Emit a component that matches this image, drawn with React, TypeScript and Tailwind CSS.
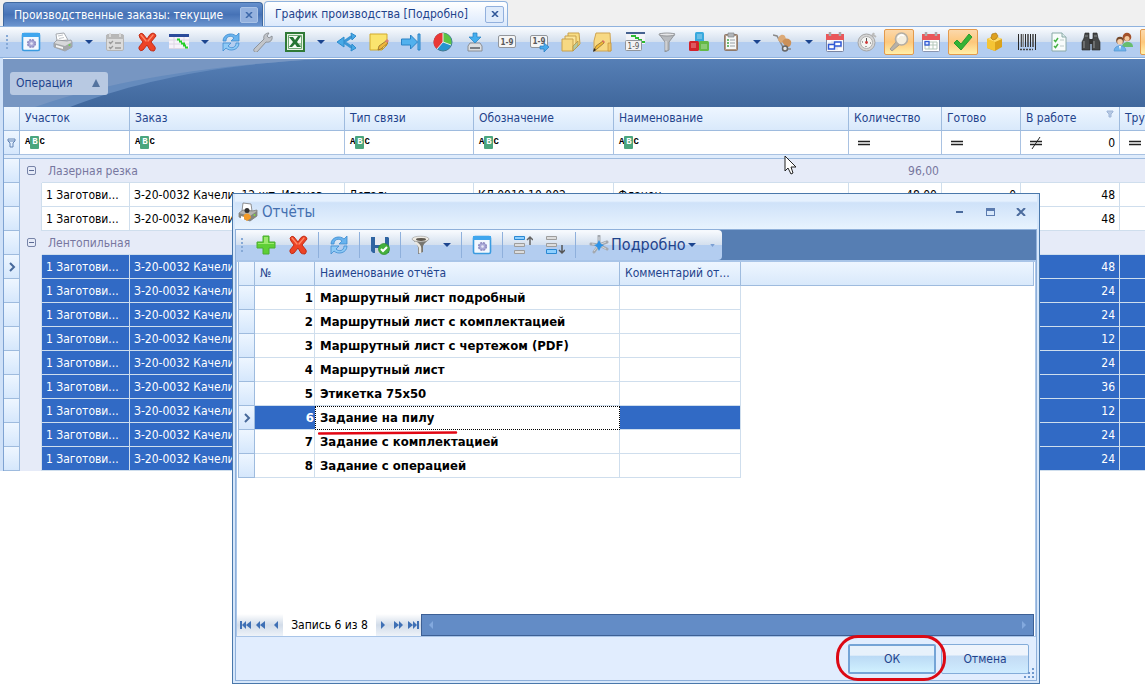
import type { ReactNode } from "react";

const icons: Record<string, ReactNode> = {
  window: (
    <>
      <rect x="1.500" y="1.500" width="17" height="17" rx="1.500" fill="#f3f8fe" stroke="#3a9be0" strokeWidth="1.600" />
      <path d="M1 1h18v4H1z" fill="#3fa6ee" />
      <circle cx="10.500" cy="11.500" r="3.800" fill="#a9a8d6" stroke="#8f8bc0" strokeWidth="1.600" strokeDasharray="2 1" />
      <circle cx="10.500" cy="11.500" r="1.300" fill="#e8e8f6" />
    </>
  ),
  printer: (
    <>
      <path d="M4 9 3 2l8-1 4 7z" fill="#fff" stroke="#a6aab0" />
      <path d="M5 4l5-1M6 6.500l5-1" stroke="#c3c7cc" />
      <path d="m1 11 3-3 10 1 4-1 1 2v5l-7 4-11-4z" fill="#d7d8da" stroke="#8b8d90" strokeWidth=".7" />
      <path d="m1 11 11 3 7-4v5l-7 4-11-4z" fill="#a4a7aa" />
      <path d="m3 13 7 2v2l-7-2z" fill="#f5f5f5" />
      <circle cx="16.500" cy="13" r="1" fill="#6fd44a" />
    </>
  ),
  dialogPrinter: (
    <>
      <path d="M4 9 5 1l8 1 1 7z" fill="#fff" stroke="#777" strokeWidth=".8" />
      <path d="m1 11 4-3 9 1 5-1v6l-7 5-11-4z" fill="#b5b4b0" stroke="#7d7e7e" strokeWidth=".8" />
      <path d="m1 11 11 3 7-5v5l-7 5-11-4z" fill="#85857f" />
      <circle cx="9" cy="8.500" r="2.500" fill="#333" />
      <path d="M5 16c0-6 8-6 8 0l-4 3z" fill="#f29a27" />
      <path d="m3 14 3 1v3l-3-1z" fill="#fff" />
      <circle cx="16.500" cy="13" r="1" fill="#7fdc42" />
    </>
  ),
  tasks: (
    <>
      <rect x="1.500" y="2.500" width="17" height="16" rx="1.500" fill="#dcdcdc" stroke="#b5b5b5" />
      <path d="M1 3h18v4H1z" fill="#b8b8b8" />
      <path d="M5 1v4M15 1v4" stroke="#d9d9d9" strokeWidth="2" />
      <path d="m4 10 1.500 1.500L8 9m-4 6 1.500 1.500L8 14M10 11h6M10 16h6" fill="none" stroke="#999" strokeWidth="1.300" />
    </>
  ),
  cross: (
    <>
      <path
        d="M2 3Q4 0 6 2l4 5q3-6 6-6 3 1 3 3l-5 6 4 5q1 2-1 4-3 0-4-1l-3-5-4 5q-3 2-4-1l0-2 4-5-3-4z"
        fill="#ed4326"
        stroke="#c22d16"
      />
      <path d="m4 3 5 6m2 0 5-6" stroke="#ff8a68" strokeWidth="1.300" strokeLinecap="round" />
    </>
  ),
  gantt: (
    <>
      <path d="M0 3h20v14H0z" fill="#f7f3fa" />
      <path d="M0 8h20M0 12h20M0 16.500h20M5 3v14M15 3v14" stroke="#ddd6e4" />
      <path d="M0 2h20v3H0z" fill="#2b4b9b" />
      <path d="M8 7.500h3M10 9.500h3M12 11.500h4M14 13.500h3M16 15.500h3" stroke="#25cf29" strokeWidth="2" />
    </>
  ),
  refresh: (
    <>
      <path d="M2 9c0-7 9-9 13-5l3-3v8h-8l3-3c-3-3-8-2-8 3z" fill="#68b3ef" stroke="#3d8bcf" strokeWidth=".8" />
      <path d="M18 11c0 7-9 9-13 5l-3 3v-8h8l-3 3c3 3 8 2 8-3z" fill="#8fcaf6" stroke="#3d8bcf" strokeWidth=".8" />
    </>
  ),
  wrench: (
    <path
      d="M1 17 11 7c-1-3 1-6 5-6l-2 3 2 2 3-2c1 4-2 7-6 6L4 20c-2 1-4-1-3-3z"
      fill="#c2c5ca"
      stroke="#888c92"
      strokeWidth=".9"
    />
  ),
  excel: (
    <>
      <path d="M0 0h20v20H0z" fill="#2f7a37" />
      <path d="M2 2h16v16H2z" fill="#e7f3e4" />
      <path d="M3.500 3.500h13v13h-13z" fill="#f7fbf6" stroke="#6fa873" />
      <path d="M13 12h3M13 14h3" stroke="#63a868" />
      <path d="M4 5h4l2 3 3-4h3l-4 6 4 5h-4l-2-3-3 3H4l4-5z" fill="#257433" />
    </>
  ),
  share: (
    <>
      <path d="M5 10c5 0 6-5 12-6M5 10c5 0 6 5 12 6" fill="none" stroke="#3c97d6" strokeWidth="3" />
      <path d="m0 10 7-5v10zM14 1l5 3-4 4zM15 12l4 4-5 3z" fill="#48a9e6" stroke="#2f8bcb" />
    </>
  ),
  note: (
    <>
      <path d="M1 2h17v11l-5 5H1z" fill="#fae46e" stroke="#d1aa2d" />
      <path d="m13 18 1-5 4 0z" fill="#fff4ad" stroke="#c19b2b" />
      <path d="m9 18 1-4 7-5 2 2-7 6z" fill="#efb739" stroke="#8f6b2a" strokeWidth=".8" />
      <path d="m16 9 2-2 2 2-2 2z" fill="#d98074" />
    </>
  ),
  toEnd: (
    <>
      <path d="M.5 7h9V3l7 7-7 7v-4h-9z" fill="#52b1ee" stroke="#2a83c6" />
      <path d="M17 2h2v16h-2z" fill="#62b7ee" stroke="#2a83c6" />
    </>
  ),
  pie: (
    <>
      <circle cx="10" cy="10" r="9" fill="#2695cf" stroke="#41788f" />
      <path d="M10 10V1A9 9 0 0 0 4 17z" fill="#e93836" />
      <path d="M10 10V1a9 9 0 0 1 8 12z" fill="#5dc443" />
      <path d="M10 1v9l-6 7m6-7 8 3" stroke="#e8eeee" fill="none" />
    </>
  ),
  download: (
    <>
      <path d="m3 14 2-3h10l2 3v5H3z" fill="#dcdee1" stroke="#8a8e94" />
      <path d="M5 16h10" stroke="#7a7e84" strokeWidth="2" />
      <path d="M8 1h4v4h4l-6 6-6-6h4z" fill="#45aeee" stroke="#237fc2" strokeWidth=".7" />
    </>
  ),
  number: (
    <>
      <rect x="1.500" y="3.500" width="17" height="12" rx="1.500" fill="#f5f5f5" stroke="#92969c" />
      <text x="10" y="13" textAnchor="middle" fontSize="8" fontWeight="bold" fill="#58595c">1-9</text>
    </>
  ),
  numberNext: (
    <>
      <rect x="1.500" y="3.500" width="17" height="12" rx="1.500" fill="#f5f5f5" stroke="#92969c" />
      <text x="10" y="12" textAnchor="middle" fontSize="8" fontWeight="bold" fill="#58595c">1-9</text>
      <path d="M11 14h4v-3l5 4-5 5v-3h-4z" fill="#47a9ec" stroke="#267bc0" strokeWidth=".7" />
    </>
  ),
  folders: (
    <>
      <path d="M7 1h11l1 11-4 4H7z" fill="#f8dd83" stroke="#c9a14c" />
      <path d="M4 4h11v11l-2 2H4z" fill="#fbe59b" stroke="#c9a14c" />
      <path d="M1 7h11v12H1z" fill="#f7d983" stroke="#c9a14c" />
      <path d="m12 19 5-5V9l-5 5z" fill="#b4c9a0" stroke="#b98c35" strokeWidth=".7" />
    </>
  ),
  folderPen: (
    <>
      <path d="M3 1h14l1 18H1V9z" fill="#f7d984" stroke="#cfa452" />
      <path d="M15 11h3v8h-3z" fill="#f0c565" stroke="#c39439" strokeWidth=".7" />
      <path d="m1 19 2-5 7-5 1 2-7 6z" fill="#f2bb36" stroke="#705127" strokeWidth=".6" />
      <path d="m9 9 1-1 2 2-1 1z" fill="#df6c62" />
      <path d="m0 20 1-4 2 2z" fill="#292929" />
    </>
  ),
  ganttNumber: (
    <>
      <path d="M1 1h19v11H1z" fill="#f2f3f7" />
      <path d="M1 1h19" stroke="#44618f" strokeWidth="2" />
      <path d="M6 4h5M10 6h4M13 8h4M16 10h4" stroke="#2cbb30" strokeWidth="2" />
      <rect x=".5" y="8.500" width="16" height="10" rx="1" fill="#f2f2f2" stroke="#92969c" />
      <text x="8.500" y="17" textAnchor="middle" fontSize="8" fill="#555">1-9</text>
    </>
  ),
  funnel: (
    <>
      <path d="M2 2h16l-6 8v8l-4 2V10z" fill="#b8bbbf" stroke="#85888c" strokeWidth=".8" />
      <ellipse cx="10" cy="2.500" rx="8" ry="1.500" fill="#e5e6e8" stroke="#85888c" strokeWidth=".8" />
      <path d="M9 9v9" stroke="#e4e5e6" />
    </>
  ),
  darkFunnel: (
    <>
      <path d="M1 4c3 3 5 5 6 8v7l5-2v-6c1-3 4-4 6-7z" fill="#77756f" />
      <path d="M4 7c3 2 5 4 5 6v5" fill="none" stroke="#e9e7e2" strokeWidth="2.500" />
      <ellipse cx="9.500" cy="4" rx="8.500" ry="2.800" fill="#eeebe4" stroke="#999" strokeWidth=".6" />
      <ellipse cx="10" cy="4.500" rx="5" ry="1.400" fill="#5e584f" />
    </>
  ),
  cubes: (
    <>
      <rect x="6" y="0" width="9" height="10" rx="1.500" fill="#38a9de" />
      <rect x="0" y="9" width="10" height="10" rx="1.500" fill="#d3222b" />
      <rect x="10" y="9" width="10" height="10" rx="1.500" fill="#65b946" />
      <path d="M8 2h5v5H8zM2 11h5v5H2zM12 12h6v5h-6z" fill="#ffffff40" />
    </>
  ),
  clipboard: (
    <>
      <rect x="3.500" y="2.500" width="13" height="16" rx="1" fill="#b39a87" stroke="#8f7a6b" />
      <path d="M5 4h10v13H5z" fill="#f6f8f8" />
      <path d="M7 1h6v4H7z" fill="#b2b6ba" stroke="#84878b" strokeWidth=".7" />
      <path d="M6 8h2M6 11h2M6 14h2" stroke="#42a246" strokeWidth="1.500" />
      <path d="M9 8h5M9 11h5M9 14h5" stroke="#99a0a6" />
    </>
  ),
  cart: (
    <>
      <path d="m0 3 4 1 7 13h7" fill="none" stroke="#8a8a8a" strokeWidth="1.500" />
      <path d="M5 8c0-4 4-7 7-4l1 3-5 4z" fill="#dcaa78" />
      <path d="M9 10c2-4 6-5 9-1 1 4-2 7-5 6z" fill="#cc9159" />
      <circle cx="12" cy="16.500" r="2.500" fill="#e6e6e6" stroke="#666" strokeWidth="1.500" />
    </>
  ),
  calendarPlan: (
    <>
      <rect x="1.500" y="2.500" width="17" height="17" rx="1" fill="#fbfbfd" stroke="#7a85a1" />
      <path d="M1 2h18v6H1z" fill="#e9575a" />
      <path d="M5 0v4M15 0v4" stroke="#aaa" strokeWidth="2.500" />
      <path d="M3 11h14M3 15h14M7 9v9M12 9v9" stroke="#d7dae4" />
      <path d="M3.500 17v-4.500h6V10H16v4H9.500v3z" fill="#fff" stroke="#315ad5" strokeWidth="1.500" />
    </>
  ),
  stopwatch: (
    <>
      <path d="m15 2 4 3m-2-4-2 4" stroke="#bbb" strokeWidth="2" />
      <circle cx="9.500" cy="10.500" r="8.500" fill="#d5d5d5" stroke="#a5a5a5" />
      <circle cx="9.500" cy="10.500" r="6" fill="#f5f5f3" stroke="#b0b0b0" />
      <path d="M9.500 10.500V6M5 10h1M13 11h1M9 14v1" stroke="#555" />
      <circle cx="9.500" cy="10.500" r="1.400" fill="#d03737" />
    </>
  ),
  magnifier: (
    <>
      <path d="m1 17 6-7 3 3-7 6z" fill="#b8b2a9" stroke="#958f86" strokeWidth=".8" />
      <circle cx="12.500" cy="7" r="6" fill="#f4eedf" stroke="#b4aea4" strokeWidth="1.700" />
      <path d="M9 6c1-3 4-4 6-2" fill="none" stroke="#fff" strokeWidth="1.500" />
    </>
  ),
  calendar: (
    <>
      <rect x="1.500" y="2.500" width="17" height="17" rx="1" fill="#fff" stroke="#8b96b0" />
      <path d="M1 2h18v6H1z" fill="#e9575a" />
      <path d="M5 0v4M15 0v4" stroke="#aaa" strokeWidth="2.500" />
      <path d="M4 10h12v7H4zM4 13h12M8 10v7M12 10v7" fill="none" stroke="#b5c8bb" />
      <rect x="4" y="9.500" width="4" height="3.500" fill="#dce7ff" stroke="#315ad5" strokeWidth="1.300" />
    </>
  ),
  check: <path d="m1 11 3-3 4 4 8-10 3 3L8 18z" fill="#35b335" stroke="#2a9a30" />,
  box: (
    <>
      <path d="m2 7 7-3 8 3v8l-7 4-8-3z" fill="#dba21b" />
      <path d="m2 7 8 3v9l-8-3z" fill="#f5c535" />
      <path d="m2 7 8 3 7-3-7-3z" fill="#ffdd6b" />
      <path d="m6 6 1-4 4-1 2 3-2 3-3 1z" fill="#dea11f" stroke="#a97816" strokeWidth=".7" />
    </>
  ),
  barcode: (
    <>
      <path d="M1.500 2v16M8.500 2v13M13.500 2v13M18.500 2v16" stroke="#292929" />
      <path d="M4.500 2v13M11 2v13M16 2v13" stroke="#4c4c4c" strokeWidth="1.600" />
      <path d="M6.500 2v13" stroke="#888" />
      <path d="M3 17.500h13" stroke="#444" strokeWidth="1.500" strokeDasharray="2 1" />
    </>
  ),
  checklist: (
    <>
      <path d="M3 1h10l4 4v14H3z" fill="#f7fcfb" stroke="#8baaa8" />
      <path d="M13 1v4h4" fill="#dcecea" stroke="#8baaa8" />
      <path d="m5 8 1.500 1.500L9 6m-4 8 1.500 1.500L9 12" fill="none" stroke="#46b444" strokeWidth="1.500" />
      <path d="M11 8h4M11 14h4" stroke="#bccbca" />
    </>
  ),
  binoculars: (
    <>
      <path d="M4 1h4v5l1 3v9H1v-8l2-4zM12 1h4l1 5 2 4v8h-8V9l1-3z" fill="#464849" stroke="#222" strokeWidth=".6" />
      <path d="M8 7h4v5H8z" fill="#333" />
      <path d="M4 4h3M13 4h3M3 9v7M13 9v7" stroke="#868989" strokeWidth="1.200" />
    </>
  ),
  people: (
    <>
      <path d="M9 15c0-6 11-7 11 0z" fill="#67bd6e" />
      <circle cx="14" cy="5" r="4.300" fill="#a4522b" />
      <circle cx="14" cy="6.500" r="2.500" fill="#f3c89d" />
      <path d="M1 19c0-7 12-7 12 0z" fill="#6fb2ec" stroke="#5595d0" strokeWidth=".7" />
      <circle cx="7" cy="8.500" r="3.800" fill="#76492b" />
      <circle cx="7" cy="9.800" r="2.800" fill="#f6cfaa" />
      <path d="m6 14 1 4 1-4z" fill="#fff" />
    </>
  ),
  plus: (
    <>
      <path d="M7 1h6v6h6v6h-6v6H7v-6H1V7h6z" fill="#5fcf35" stroke="#4bae30" />
      <path d="M8 2h4v6h6v1H8H2V8h6z" fill="#9be86e" />
    </>
  ),
  save: (
    <>
      <path d="M1 2h17l1 1v15H3l-2-2z" fill="#2f64a1" />
      <path d="M5 2h10v8H5z" fill="#e7ebf2" />
      <path d="M5 13h8v5H5z" fill="#c9d3e0" />
      <circle cx="14" cy="14" r="5.500" fill="#45b03c" stroke="#2f8f2c" strokeWidth=".7" />
      <path d="m11 14 2 2 4-4" fill="none" stroke="#fff" strokeWidth="2" />
    </>
  ),
  rowsUp: (
    <>
      <path d="M1.500 1.500h10v3h-10z" fill="#8fd0ff" stroke="#2b88d2" />
      <path d="M1.500 8.500h10v3h-10zM1.500 15.500h10v3h-10z" fill="#ddd" stroke="#9d9d9d" />
      <path d="M17 10V2m-3 3 3-3 3 3" fill="none" stroke="#666" strokeWidth="1.500" />
    </>
  ),
  rowsDown: (
    <>
      <path d="M1.500 1.500h10v3h-10zM1.500 8.500h10v3h-10z" fill="#ddd" stroke="#9d9d9d" />
      <path d="M1.500 14.500h10v4h-10z" fill="#8fd0ff" stroke="#2b88d2" />
      <path d="M17 10v8m-3-3 3 3 3-3" fill="none" stroke="#555" strokeWidth="1.500" />
    </>
  ),
  network: (
    <>
      <path d="M10 10V1m0 9 8-3m-8 3 8 4m-8-4-5 7m5-7-8-1" stroke="#a4a9b0" strokeWidth="3" strokeLinecap="round" />
      <path d="M10 10V2m0 8 7-3m-7 3 7 4m-7-4-5 6m5-6-7-1" stroke="#d4d8dc" />
      <path d="M10 5l2 4 3 1-3 2-2 4-2-4-3-2 3-1z" fill="#2d92e6" />
    </>
  ),
};

function Icon({ name }: { name: string }) {
  return (
    <svg viewBox="0 0 20 20" className="size-5 shrink-0" fill="none" aria-hidden="true">
      {icons[name]}
    </svg>
  );
}

function Caret() {
  return (
    <svg viewBox="0 0 8 4" className="h-1 w-2" aria-hidden="true">
      <path d="M0 0h8L4 4z" fill="#1c458f" />
    </svg>
  );
}

function ToolButton({ name, label, active }: { name: string; label: string; active?: boolean }) {
  return (
    <button
      type="button"
      aria-label={label}
      aria-pressed={active}
      className={
        active
          ? "mx-px flex h-[26px] w-[30px] shrink-0 items-center justify-center rounded-xs border border-[#e39a4c] bg-linear-to-b from-[#fbd8ab] via-[#fdc77b] to-[#fff0a9]"
          : "mx-px flex h-[26px] w-[30px] shrink-0 items-center justify-center"
      }
    >
      {name && <Icon name={name} />}
    </button>
  );
}

function CaretButton({ label }: { label: string }) {
  return (
    <button type="button" aria-label={label} className="flex h-[26px] w-5 shrink-0 items-center justify-center">
      <Caret />
    </button>
  );
}

function Grip() {
  return (
    <span className="flex w-2 shrink-0 flex-col items-center gap-[2px]">
      <i className="size-[2px] bg-[#86a9d6]" />
      <i className="size-[2px] bg-[#86a9d6]" />
      <i className="size-[2px] bg-[#86a9d6]" />
      <i className="size-[2px] bg-[#86a9d6]" />
    </span>
  );
}

function Separator() {
  return <span className="mx-1 h-[26px] w-px shrink-0 bg-[#8fb0dc]" />;
}

// [icon, label, has a drop-down, is pressed]
const tools: [string, string, boolean?, boolean?][] = [
  ["window", "Настройка"],
  ["printer", "Печать", true],
  ["tasks", "Задачи"],
  ["cross", "Удалить"],
  ["gantt", "Диаграмма", true],
  ["refresh", "Обновить"],
  ["wrench", "Сервис"],
  ["excel", "Excel", true],
  ["share", "Связи"],
  ["note", "Заметка"],
  ["toEnd", "В конец"],
  ["pie", "График"],
  ["download", "Загрузить"],
  ["number", "Нумерация"],
  ["numberNext", "Следующий номер"],
  ["folders", "Папки"],
  ["folderPen", "Изменить папку"],
  ["ganttNumber", "Номера на диаграмме"],
  ["funnel", "Фильтр"],
  ["cubes", "Комплектация"],
  ["clipboard", "Задание", true],
  ["cart", "Перемещение", true],
  ["calendarPlan", "План"],
  ["stopwatch", "Время"],
  ["magnifier", "Поиск", false, true],
  ["calendar", "Календарь"],
  ["check", "Готово", false, true],
  ["box", "Склад"],
  ["barcode", "Штрихкод"],
  ["checklist", "Проверка"],
  ["binoculars", "Найти"],
  ["people", "Сотрудники"],
  ["", "Ещё", false, true],
];

const workCounts = [48, 24, 24, 12, 24, 36, 12, 24, 24];

const reports = [
  "Маршрутный лист подробный",
  "Маршрутный лист с комплектацией",
  "Маршрутный лист с чертежом (PDF)",
  "Маршрутный лист",
  "Этикетка 75x50",
  "Задание на пилу",
  "Задание с комплектацией",
  "Задание с операцией",
];

const head = "border-r border-b border-[#9ebbde] bg-linear-to-b from-[#eef6ff] to-[#d9e9fb] px-[5px] pb-px text-left font-normal text-[#1f438c]";
const marker = "border-r border-b border-[#9ebbde] bg-linear-to-b from-[#eef6ff] to-[#d5e7fc]";
const filterCell = "border-r border-b border-[#a9c2e2] bg-white px-[5px]";
const cell = "truncate border-r border-b border-[#cfdeed] px-1";
const bar = "bg-linear-to-b from-[#f6f9fd] from-5% via-[#d3dfee] via-50% to-[#b3cdf0] to-50%";

function Abc() {
  return (
    <span className="flex items-center font-mono text-[9px] leading-[13px] font-bold text-black">
      A<span className="w-[9px] rounded-[1px] bg-[#4ba67e] text-center text-white">B</span>C
    </span>
  );
}

function Equals({ crossed }: { crossed?: boolean }) {
  return (
    <svg viewBox="0 0 12 12" className="ml-1 h-3 w-3" fill="none" stroke="#222" aria-hidden="true">
      <path d="M0 4.500h12M0 7.500h12" strokeWidth="1.500" />
      {crossed && <path d="m2 12 8-12" />}
    </svg>
  );
}

function Chevron() {
  return (
    <svg viewBox="0 0 8 10" className="mx-auto h-[10px] w-2" fill="none" aria-hidden="true">
      <path d="m2 1 4 4-4 4" stroke="#47699b" strokeWidth="2" />
    </svg>
  );
}

function GroupRow({ title, total }: { title: string; total?: string }) {
  return (
    <tr className="h-6 bg-[#e6ebf8] text-[#77779f]">
      <td className={marker} />
      <td>
        <button type="button" aria-label="Свернуть" className="mx-auto mb-[2px] flex size-[9px] items-center justify-center rounded-xs border border-[#7884a8]">
          <i className="h-px w-[5px] bg-[#5c6a94]" />
        </button>
      </td>
      <td colSpan={5} className="border-b border-[#cfdeed] px-[6px]">{title}</td>
      <td className="border-b border-[#cfdeed] pr-[3px] text-right">{total}</td>
      <td colSpan={3} className="border-b border-[#cfdeed]" />
    </tr>
  );
}

function OrderRow({ count, selected, current }: { count: number; selected?: boolean; current?: boolean }) {
  return (
    <tr className={selected ? "h-6 bg-[#316ac5] text-white" : "h-6 bg-white text-black"}>
      <td className={marker}>{current && <Chevron />}</td>
      <td className="border-r border-[#cfdeed] bg-[#e6ebf8]" />
      <td className={cell}>1 Заготови...</td>
      <td className={cell}>З-20-0032 Качели, 12 шт, Иванов</td>
      <td className={cell}>Деталь</td>
      <td className={cell}>КЛ.0010.10.002</td>
      <td className={cell}>Фланец</td>
      <td className={cell + " text-right"}>{count},00</td>
      <td className={cell + " text-right"}>0</td>
      <td className={cell + " text-right"}>{count}</td>
      <td className={cell} />
    </tr>
  );
}

function OrdersTable() {
  return (
    <table className="w-full table-fixed border-separate border-spacing-0 border-l border-[#7fa3d2] text-[12px] leading-4 [&_tr>:last-child]:border-r-0">
      <colgroup>
        <col className="w-[16px]" />
        <col className="w-[22px]" />
        <col className="w-[88px]" />
        <col className="w-[215px]" />
        <col className="w-[129px]" />
        <col className="w-[140px]" />
        <col className="w-[235px]" />
        <col className="w-[93px]" />
        <col className="w-[79px]" />
        <col className="w-[99px]" />
        <col />
      </colgroup>
      <thead>
        <tr className="h-6">
          <th className={head} />
          <th colSpan={2} className={head}>Участок</th>
          <th className={head}>Заказ</th>
          <th className={head}>Тип связи</th>
          <th className={head}>Обозначение</th>
          <th className={head}>Наименование</th>
          <th className={head}>Количество</th>
          <th className={head}>Готово</th>
          <th className={head}>
            <span className="flex justify-between">
              В работе
              <svg viewBox="0 0 8 8" className="size-2 shrink-0" aria-hidden="true">
                <path d="M1 1h6v1L5 4v3H3V4L1 2z" fill="#b7c9e3" stroke="#9fb6d8" />
              </svg>
            </span>
          </th>
          <th className={head + " overflow-hidden whitespace-nowrap"}>Тру</th>
        </tr>
        <tr className="h-6">
          <td className={marker}>
            <svg viewBox="0 0 9 10" className="mx-auto h-[10px] w-[9px]" fill="none" stroke="#6384b5" aria-hidden="true">
              <path d="M1 1h7v2L6 5v4H3V5L1 3zM1 3h7" />
            </svg>
          </td>
          <td colSpan={2} className={filterCell}><Abc /></td>
          <td className={filterCell}><Abc /></td>
          <td className={filterCell}><Abc /></td>
          <td className={filterCell}><Abc /></td>
          <td className={filterCell}><Abc /></td>
          <td className={filterCell}><Equals /></td>
          <td className={filterCell}><Equals /></td>
          <td className="border-r border-b border-[#a9c2e2] bg-white pr-1 pl-[5px]">
            <div className="flex items-center justify-between">
              <Equals crossed />
              <input aria-label="Фильтр: В работе" defaultValue="0" className="w-10 text-right text-black outline-none" />
            </div>
          </td>
          <td className={filterCell}><Equals /></td>
        </tr>
        <tr className="h-1">
          <td colSpan={11} className="h-1 border-b border-[#9ebbde] bg-[#dfecfc] p-0" />
        </tr>
      </thead>
      <tbody>
        <GroupRow title="Лазерная резка" total="96,00" />
        <OrderRow count={48} />
        <OrderRow count={48} />
        <GroupRow title="Лентопильная" />
        {workCounts.map((count, i) => (
          <OrderRow key={i} count={count} selected current={i === 0} />
        ))}
      </tbody>
    </table>
  );
}

function ReportsTable() {
  return (
    <table className="w-full table-fixed border-separate border-spacing-0 border-l border-[#9ebbde] text-[12px] leading-4">
      <colgroup>
        <col className="w-[16px]" />
        <col className="w-[60px]" />
        <col className="w-[305px]" />
        <col className="w-[121px]" />
        <col />
      </colgroup>
      <thead>
        <tr className="h-6">
          <th className={head} />
          <th className={head}>№</th>
          <th className={head}>Наименование отчёта</th>
          <th className={head + " whitespace-nowrap"}>Комментарий от...</th>
          <th className={head} />
        </tr>
      </thead>
      <tbody>
        {reports.map((title, i) => {
          const selected = i === 5;
          return (
            <tr key={title} className="h-6 text-[13px] font-bold text-black">
              <td className={marker}>{selected && <Chevron />}</td>
              <td className={selected ? "border-b border-[#cfdeed] bg-[#316ac5] px-px text-right text-white" : "border-r border-b border-[#cfdeed] px-px text-right"}>
                {i + 1}
              </td>
              <td className={selected ? "relative border border-dotted border-black px-1" : "border-r border-b border-[#cfdeed] px-[5px]"}>
                {title}
                {selected && (
                  <svg viewBox="0 0 140 4" className="absolute top-6 left-[2px] z-10 h-1 w-[140px]" fill="none" aria-hidden="true">
                    <path d="M1 2.500C40 2.500 80 1.500 138 1.500" stroke="#e20613" strokeWidth="2.500" strokeLinecap="round" />
                  </svg>
                )}
              </td>
              <td className={selected ? "border-r border-b border-[#cfdeed] bg-[#316ac5]" : "border-r border-b border-[#cfdeed]"} />
              <td />
            </tr>
          );
        })}
      </tbody>
    </table>
  );
}

function NavButton({ label, d }: { label: string; d: string }) {
  return (
    <button type="button" aria-label={label} className="flex h-full w-[15px] items-center justify-center">
      <svg viewBox="0 0 11 8" className="h-2 w-[11px]" fill="#3f70b5" aria-hidden="true">
        <path d={d} />
      </svg>
    </button>
  );
}

function ReportsDialog() {
  return (
    <div
      role="dialog"
      aria-label="Отчёты"
      className="absolute top-[193px] left-[232px] flex h-[491px] w-[808px] flex-col border border-[#4a78ab] bg-[#d6e7fb] px-[2px] pb-[2px]"
    >
      <div className="flex h-[35px] shrink-0 items-center bg-linear-to-b from-[#e6f1fe] from-20% via-[#cfe2f9] via-25% to-[#e8f3fe] pr-[8px] pl-[3px]">
        <Icon name="dialogPrinter" />
        <h2 className="ml-1 flex-1 text-[15px] leading-5 text-[#4470b0]">Отчёты</h2>
        <div className="flex items-center gap-[15px] text-[#4b6b9d]">
          <button type="button" aria-label="Свернуть" className="flex size-4 items-center justify-center">
            <i className="h-[2px] w-[7px] bg-[#4b6b9d]" />
          </button>
          <button type="button" aria-label="Развернуть" className="flex size-4 items-center justify-center">
            <i className="h-2 w-[9px] border border-t-[3px] border-[#5b7baf]" />
          </button>
          <button type="button" aria-label="Закрыть" className="flex size-4 items-center justify-center">
            <svg viewBox="0 0 10 8" className="h-2 w-[10px]" fill="none" stroke="#4b6b9d" strokeWidth="2">
              <path d="m1 0 8 8M9 0 1 8" />
            </svg>
          </button>
        </div>
      </div>

      <div className="flex min-h-0 flex-1 flex-col border border-[#8fb0da]">
        <div className="flex h-[31px] shrink-0 border-b border-[#a9c5e8] bg-[#567eb3]">
          <div className={"flex items-center rounded-r-sm pr-[7px] pl-[2px] " + bar}>
            <Grip />
            <span className="w-1" />
            <ToolButton name="plus" label="Добавить" />
            <ToolButton name="cross" label="Удалить" />
            <Separator />
            <ToolButton name="refresh" label="Обновить" />
            <Separator />
            <ToolButton name="save" label="Сохранить" />
            <Separator />
            <ToolButton name="darkFunnel" label="Фильтр" />
            <CaretButton label="Варианты фильтра" />
            <Separator />
            <ToolButton name="window" label="Настройка" />
            <Separator />
            <ToolButton name="rowsUp" label="Выше" />
            <ToolButton name="rowsDown" label="Ниже" />
            <Separator />
            <button type="button" className="flex h-[26px] items-center pl-[9px] text-[16px] text-[#1f438c]">
              <Icon name="network" />
              <span className="mx-[2px]">Подробно</span>
              <Caret />
            </button>
            <button type="button" aria-label="Ещё" className="ml-[14px]">
              <svg viewBox="0 0 6 4" className="h-[3px] w-[5px]" fill="#7c9fd2" aria-hidden="true">
                <path d="M0 0h6L3 4z" />
              </svg>
            </button>
          </div>
        </div>

        <div className="flex min-h-0 flex-1 flex-col border border-[#a9c5e8] bg-white">
          <div className="min-h-0 flex-1 px-px">
            <ReportsTable />
          </div>
          <div className="flex h-[22px] shrink-0 items-stretch pr-px text-[12px]">
            <div className="flex bg-linear-to-b from-white via-[#d2dce9] to-[#eef3f9] pl-px">
              <NavButton label="Первая запись" d="M0 0h2v8H0zM6 0v8L2 4zM11 0v8L6 4z" />
              <NavButton label="Предыдущая страница" d="M5 0v8L1 4zM10 0v8L5 4z" />
              <NavButton label="Предыдущая запись" d="M8 0v8L4 4z" />
            </div>
            <span className="flex w-[93px] items-center justify-center whitespace-nowrap text-black">Запись 6 из 8</span>
            <div className="flex bg-linear-to-b from-white via-[#d2dce9] to-[#eef3f9]">
              <NavButton label="Следующая запись" d="M3 0v8l4-4z" />
              <NavButton label="Следующая страница" d="M1 0v8l5-4zM6 0v8l4-4z" />
              <NavButton label="Последняя запись" d="M0 0v8l5-4zM5 0v8l4-4zM9 0h2v8H9z" />
            </div>
            <div className="flex flex-1 items-center justify-between border border-[#3d6095] bg-[#638cc6] px-[7px]">
              <svg viewBox="0 0 4 8" className="h-2 w-1" fill="#83a9de"><path d="M4 0v8L0 4z" /></svg>
              <svg viewBox="0 0 4 8" className="h-2 w-1" fill="#83a9de"><path d="M0 0v8l4-4z" /></svg>
            </div>
          </div>
        </div>

        <div className="relative flex h-[43px] shrink-0 items-center justify-end gap-[5px] bg-[#e1edfe] pr-[7px] text-[12px] text-[#1f438c]">
          <div className="relative">
            <button type="button" className="h-[30px] w-[88px] rounded-xs border-2 border-[#75a4d6] bg-linear-to-b from-[#e7f1fb] from-35% via-[#bbdaf5] via-40% to-[#d0f1ff]">
              ОК
            </button>
            <span className="pointer-events-none absolute -top-[9px] -left-3 z-10 h-[46px] w-[110px] rounded-[22px] border-[3px] border-[#dc0914]" />
          </div>
          <button type="button" className="h-[30px] w-[88px] rounded-xs border border-[#83acd9] bg-linear-to-b from-[#eef4fc] from-35% via-[#c3dbf4] via-40% to-[#cfecff]">
            Отмена
          </button>
          <svg viewBox="0 0 10 10" className="absolute right-[2px] bottom-[2px] size-[10px]" fill="#6e98ce" aria-hidden="true">
            <path d="M8 0h2v2H8zM4 4h2v2H4zM8 4h2v2H8zM0 8h2v2H0zM4 8h2v2H4zM8 8h2v2H8z" />
          </svg>
        </div>
      </div>
    </div>
  );
}

export default function App() {
  return (
    <div className="relative h-screen w-full overflow-hidden bg-white font-['DejaVu_Sans_Condensed','DejaVu_Sans',sans-serif]">
      {/* Document tabs */}
      <div role="tablist" className="flex h-[26px] items-end gap-px bg-[#f0f0f0] pl-[3px] text-[12px] leading-5">
        <div className="flex h-6 w-[260px] items-center justify-between rounded-t-sm border border-b-0 border-[#3f689f] bg-linear-to-b from-[#6690cd] via-[#4672b6] to-[#6c95cf] pr-1 pl-[10px] text-white">
          <button type="button" role="tab" aria-selected="false" className="whitespace-nowrap">Производственные заказы: текущие</button>
          <button type="button" aria-label="Закрыть вкладку" className="flex h-4 w-[18px] items-center justify-center rounded-xs border border-[#a9c2e6] bg-[#94b1de]">
            <svg viewBox="0 0 8 6" className="h-[6px] w-2" stroke="#3d68a9" strokeWidth="1.500"><path d="m1 0 6 6M7 0 1 6" /></svg>
          </button>
        </div>
        <div className="flex h-[25px] w-[244px] items-center justify-between rounded-t-sm border border-b-0 border-[#8fb2de] bg-linear-to-b from-white to-[#dbe9fc] pr-[3px] pl-[10px] text-[#1f438c]">
          <button type="button" role="tab" aria-selected="true" className="whitespace-nowrap">График производства [Подробно]</button>
          <button type="button" aria-label="Закрыть вкладку" className="flex h-[17px] w-[19px] items-center justify-center rounded-xs border border-[#92b0dd] bg-[#dfebfb]">
            <svg viewBox="0 0 8 6" className="h-[6px] w-2" stroke="#2f5698" strokeWidth="1.500"><path d="m1 0 6 6M7 0 1 6" /></svg>
          </button>
        </div>
      </div>

      {/* Main toolbar */}
      <div className={"flex h-8 items-center overflow-hidden border-t border-b border-[#8fb2de] pl-[3px] " + bar}>
        <Grip />
        <span className="w-1 shrink-0" />
        {tools.map(([name, label, menu, active]) => (
          <div key={label} className="flex shrink-0">
            <ToolButton name={name} label={label} active={active} />
            {menu && <CaretButton label={label + ": меню"} />}
          </div>
        ))}
      </div>

      <main className="border-l-[3px] border-[#cfe1f8]">
        {/* Group-by panel */}
        <div className="relative flex h-[49px] items-center border-t border-white bg-linear-to-b from-[#567fb6] to-[#40679c] pl-[7px]">
          <svg viewBox="0 0 340 48" className="absolute top-0 left-0 h-12 w-[340px]" aria-hidden="true">
            <path d="M0 0h320C210 5 125 25 67 48H0z" fill="#658bbd" />
            <path d="M0 0h318C200 7 105 22 32 48H0z" fill="#7796c2" />
          </svg>
          <button type="button" className="relative flex h-[23px] w-[98px] items-center justify-between rounded-[3px] bg-[#b8c9e2] pr-2 pl-[6px] text-[12px] text-[#1f438c]">
            Операция
            <svg viewBox="0 0 8 8" className="size-2" fill="#55749f" aria-hidden="true"><path d="m4 0 4 8H0z" /></svg>
          </button>
        </div>
        <OrdersTable />
      </main>

      <ReportsDialog />

      {/* Mouse pointer */}
      <svg viewBox="0 0 13 20" className="pointer-events-none absolute top-[155px] left-[784px] h-5 w-[13px]" aria-hidden="true">
        <path d="M1 1v15l3-3 3 6 2-1-2-6h5z" fill="#fff" stroke="#222" />
      </svg>
    </div>
  );
}
